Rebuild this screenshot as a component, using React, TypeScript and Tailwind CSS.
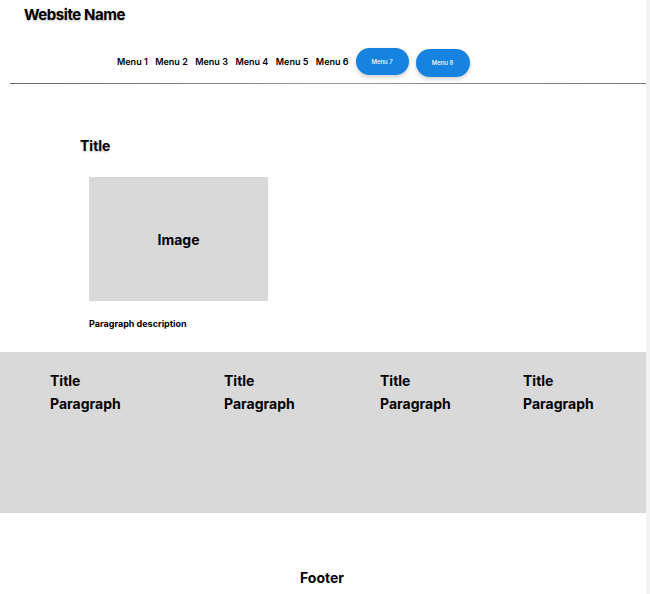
export default function App() {
  const menus = ['Menu 1', 'Menu 2', 'Menu 3', 'Menu 4', 'Menu 5', 'Menu 6'];
  const columns = [
    { pl: 'pl-[50px]', w: 'w-[174px]' },
    { pl: '', w: 'w-[156px]' },
    { pl: '', w: 'w-[143px]' },
    { pl: '', w: 'w-[120px]' },
  ];
  const shadow = '[text-shadow:0_1px_2px_rgba(0,0,0,0.25)]';

  return (
    <div className="flex w-[650px] min-h-[594px] bg-white font-['Inter','Liberation_Sans',sans-serif] text-black">
      <div className="w-[646px] flex flex-col">
        {/* Header */}
        <header className="pl-6 pt-[6px]">
          <h1 className={`text-[15px] font-bold leading-[18px] tracking-[-0.45px] ${shadow}`}>Website Name</h1>
        </header>
        <nav className="flex items-center pl-[117px] pt-[19px] h-[55px]">
          <div className="flex items-center gap-[7.5px]">
            {menus.map(m => (
              <span key={m} className="text-[9px] font-semibold leading-none">{m}</span>
            ))}
          </div>
          <button className="ml-[7px] w-[53px] h-[27px] rounded-full bg-[#1683e0] text-white text-[6px] font-medium shadow-[0_2px_4px_rgba(0,0,0,0.2)]">
            Menu 7
          </button>
          <button className="ml-[7px] mt-[3px] w-[54px] h-[28px] rounded-full bg-[#1683e0] text-white text-[6px] font-medium shadow-[0_2px_4px_rgba(0,0,0,0.2)]">
            Menu 8
          </button>
        </nav>
        <div className="ml-[10px] mt-[4px] h-px bg-gradient-to-r from-[#666] via-[#999] to-[#777]" />

        {/* Main */}
        <section className="pl-[80px] pt-[54px] h-[268px]">
          <h2 className={`text-[14px] font-bold leading-[16px] ${shadow}`}>Title</h2>
          <div className="ml-[9px] mt-[23px] w-[179px] h-[124px] bg-[#d9d9d9] flex items-center justify-center">
            <span className="text-[14px] font-bold">Image</span>
          </div>
          <p className="ml-[9px] mt-[17px] text-[9px] font-bold leading-[11px]">Paragraph description</p>
        </section>

        {/* Features */}
        <section className="h-[161px] bg-[#d9d9d9] flex pt-[21px]">
          {columns.map((c, i) => (
            <div key={i} className={`${c.pl} ${c.w} box-content shrink-0`}>
              <h3 className="text-[14px] font-bold leading-[16px]">Title</h3>
              <p className="mt-[7px] text-[14px] font-bold leading-[16px]">Paragraph</p>
            </div>
          ))}
        </section>

        {/* Footer */}
        <footer className="flex justify-center pt-[57px]">
          <span className="text-[14px] font-bold leading-[16px] mr-[2px]">Footer</span>
        </footer>
      </div>
      <div className="w-[4px] bg-[#f3f3f3]" />
    </div>
  );
}
